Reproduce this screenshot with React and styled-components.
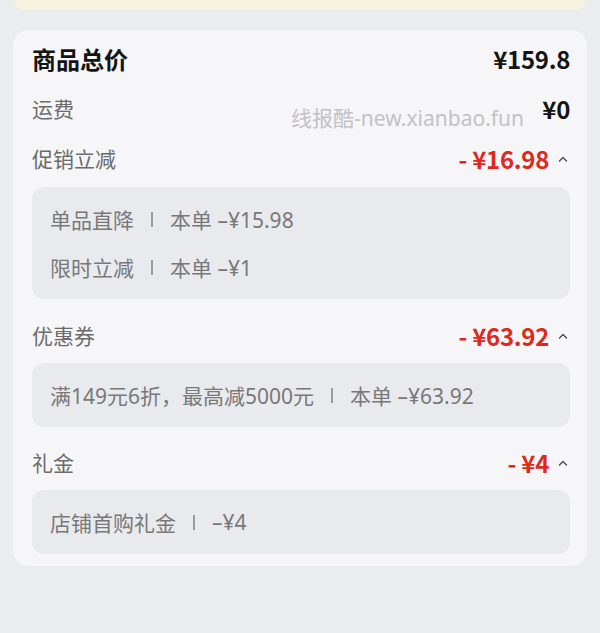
import React from 'react'
import styled, { createGlobalStyle } from 'styled-components'

const GlobalStyle = createGlobalStyle`
  html, body {
    margin: 0;
    padding: 0;
    background: #ebecf0;
    font-family: "Noto Sans CJK SC", "Noto Sans", sans-serif;
  }
`

const Page = styled.div`
  min-height: 633px;
  padding: 0 13px;
  box-sizing: border-box;
  background: #ebecf0;
`

const TopStrip = styled.div`
  height: 10px;
  margin: 0 1px;
  background: #f7f2df;
  border-radius: 0 0 12px 12px;
`

const Card = styled.div`
  position: relative;
  margin-top: 20px;
  padding: 10px 17px 12px 19px;
  background: #f6f6f8;
  border-radius: 16px;
  display: flex;
  flex-direction: column;
`

const Row = styled.div`
  display: flex;
  align-items: center;
  justify-content: space-between;
  height: 36px;
  margin-top: ${p => p.$gap || 0}px;
`

const Title = styled.span`
  font-size: 24px;
  font-weight: 700;
  color: #141414;
`

const Label = styled.span`
  font-size: 21px;
  color: #6b6b6b;
`

const Amount = styled.span`
  font-size: 24px;
  font-weight: 700;
  color: ${p => (p.$red ? '#dc2a1d' : '#141414')};
  letter-spacing: -0.3px;
`

const AmountGroup = styled.div`
  display: flex;
  align-items: center;
`

const Caret = styled.svg`
  width: 10px;
  height: 6px;
  margin: 2px 2px 0 9px;
`

const Watermark = styled.span`
  position: absolute;
  left: 278px;
  top: 72px;
  font-size: 21px;
  color: #c2c2c4;
  font-family: "Noto Sans", "Noto Sans CJK SC", sans-serif;
  pointer-events: none;
`

const DetailBox = styled.div`
  margin-top: ${p => p.$gap || 0}px;
  padding: 16px 18px;
  background: #e9eaee;
  border-radius: 12px;
  display: flex;
  flex-direction: column;
  gap: 16px;
`

const DetailLine = styled.div`
  display: flex;
  align-items: center;
  height: 32px;
  font-size: 21px;
  color: #787878;
  font-family: "Noto Sans", "Noto Sans CJK SC", sans-serif;
`

const Sep = styled.span`
  width: 2px;
  height: 15px;
  margin: 0 17px;
  background: #9a9a9a;
`

const ChevronUp = () => (
  <Caret viewBox="0 0 10 6">
    <path d="M1.5 5 L5 1.5 L8.5 5" fill="none" stroke="#444" strokeWidth="1.3" strokeLinecap="round" strokeLinejoin="round" />
  </Caret>
)

const Discount = ({ value }) => (
  <AmountGroup>
    <Amount $red>- ¥{value}</Amount>
    <ChevronUp />
  </AmountGroup>
)

const Detail = ({ name, value }) => (
  <DetailLine>
    {name}
    <Sep />
    {value}
  </DetailLine>
)

const App = () => (
  <>
    <GlobalStyle />
    <Page>
      <TopStrip />
      <Card>
        <Row>
          <Title>商品总价</Title>
          <Amount>¥159.8</Amount>
        </Row>
        <Row $gap={14}>
          <Label>运费</Label>
          <Amount>¥0</Amount>
        </Row>
        <Watermark>线报酷-new.xianbao.fun</Watermark>
        <Row $gap={14}>
          <Label>促销立减</Label>
          <Discount value="16.98" />
        </Row>
        <DetailBox $gap={11}>
          <Detail name="单品直降" value="本单 –¥15.98" />
          <Detail name="限时立减" value="本单 –¥1" />
        </DetailBox>
        <Row $gap={18}>
          <Label>优惠券</Label>
          <Discount value="63.92" />
        </Row>
        <DetailBox $gap={10}>
          <Detail name="满149元6折，最高减5000元" value="本单 –¥63.92" />
        </DetailBox>
        <Row $gap={17}>
          <Label>礼金</Label>
          <Discount value="4" />
        </Row>
        <DetailBox $gap={10}>
          <Detail name="店铺首购礼金" value="–¥4" />
        </DetailBox>
      </Card>
    </Page>
  </>
)

export default App
